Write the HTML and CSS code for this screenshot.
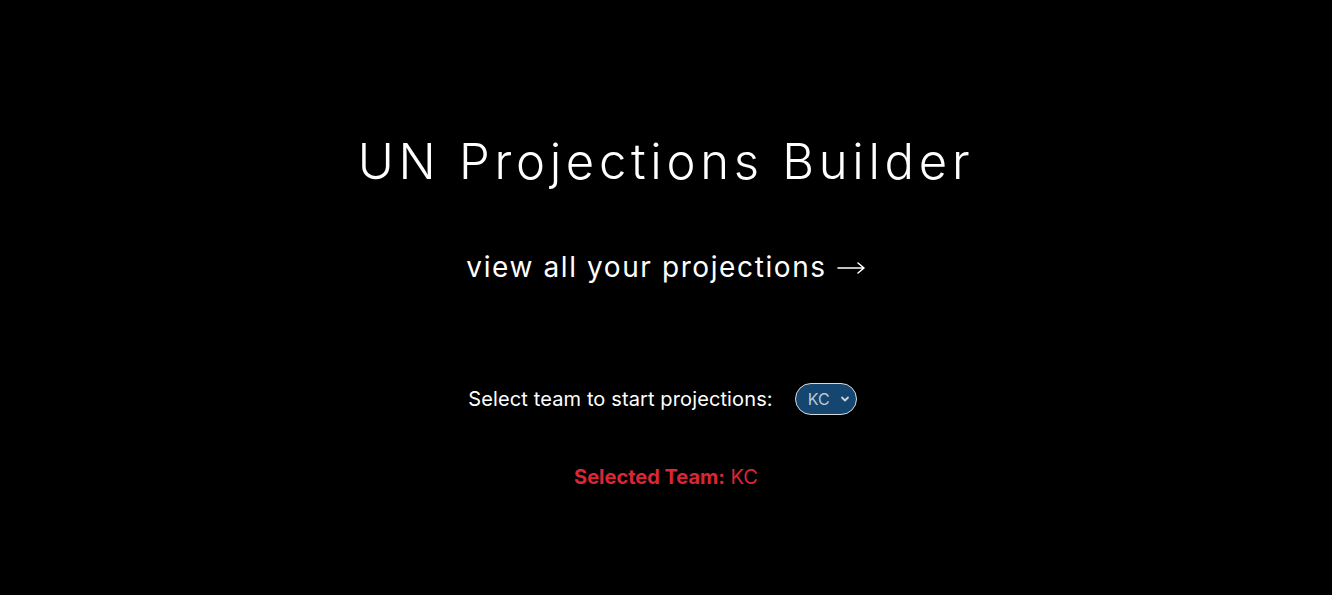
FILE: index.html
```html
<!DOCTYPE html>
<html>
<head>
<meta charset="utf-8">
<title>UN Projections Builder</title>
<link rel="stylesheet" href="styles.css">
</head>
<body>
<main class="page">
  <h1 class="title">UN Projections Builder</h1>
  <a class="view-link" href="#">view all your projections <svg class="arrow" width="29" height="14" viewBox="0 0 29 14" aria-hidden="true"><path d="M1 7 H27 M21 2 L27 7 L21 12" fill="none" stroke="#fff" stroke-width="1.6" stroke-linecap="round" stroke-linejoin="round"/></svg></a>
  <div class="select-row">
    <label class="select-label" for="team">Select team to start projections:</label>
    <select id="team" class="team-select">
      <option>KC</option>
    </select>
  </div>
  <p class="selected"><strong>Selected Team:</strong> KC</p>
</main>
</body>
</html>
```
FILE: styles.css
```css
html, body {
  margin: 0;
  padding: 0;
  background: #000;
  color: #fff;
  font-family: Inter, "Noto Sans", sans-serif;
}
.page {
  display: flex;
  flex-direction: column;
  align-items: center;
  padding-top: 133px;
}
.title {
  margin: 0;
  font-size: 49px;
  font-weight: 300;
  letter-spacing: 4.7px;
  line-height: 58px;
  color: #fff;
}
.view-link {
  margin-top: 59px;
  font-size: 28px;
  font-weight: 400;
  letter-spacing: 1.6px;
  line-height: 34px;
  color: #fff;
  text-decoration: none;
  display: flex;
  align-items: center;
  gap: 10px;
}
.arrow {
  display: block;
  margin-top: 2px;
}
.select-row {
  margin-top: 99px;
  display: flex;
  align-items: center;
  gap: 22px;
  padding-right: 7px;
}
.select-label {
  font-size: 20px;
  letter-spacing: 0.12px;
  color: #fff;
}
.team-select {
  appearance: none;
  -webkit-appearance: none;
  background-color: #144670;
  color: #b9c9d8;
  border: 1px solid #d8d8d8;
  border-radius: 16px;
  height: 32px;
  width: 62px;
  padding: 0 0 0 12px;
  font-family: Inter, "Noto Sans", sans-serif;
  font-size: 16px;
  background-image: url("data:image/svg+xml;utf8,<svg xmlns='http://www.w3.org/2000/svg' width='10' height='8' viewBox='0 0 10 8'><path d='M2 2.5 L5 5.5 L8 2.5' fill='none' stroke='%23c8d4de' stroke-width='1.8' stroke-linecap='round' stroke-linejoin='round'/></svg>");
  background-repeat: no-repeat;
  background-position: right 6px center;
}
.selected {
  margin: 50px 0 0;
  font-size: 20px;
  color: #dc2636;
}
.selected strong {
  font-weight: 700;
}
```
